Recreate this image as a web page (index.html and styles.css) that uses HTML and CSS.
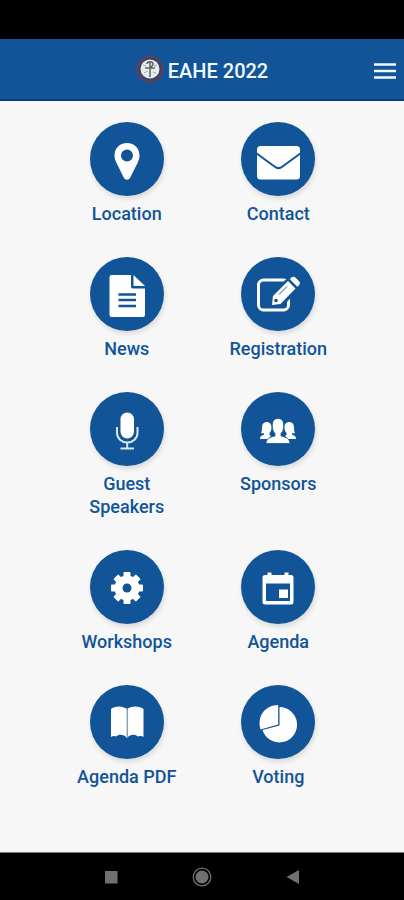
FILE: index.html
```html
<!DOCTYPE html>
<html lang="en">
<head>
<meta charset="utf-8">
<meta name="viewport" content="width=device-width, initial-scale=1">
<title>EAHE 2022</title>
<link rel="stylesheet" href="styles.css">
</head>
<body>
<div class="status"></div>
<header class="header">
  <div class="brand">
    <svg class="logo" viewBox="0 0 28 28" aria-hidden="true">
      <circle cx="14" cy="14" r="12.500" fill="#354568" stroke="#633f58" stroke-width="2"/>
      <circle cx="14" cy="14" r="9.500" fill="#e9ecec"/>
      <g fill="none" stroke="#5c646e" stroke-width="1.500">
        <path d="M14 6v16M9 13h10M11 9c0-3 6-3 6 0 0 2-3 3-3 5" />
        <path d="M7 10l3 1M18 11l3-1M8 18l4-2M17 17l3 1" stroke="#a6acb2" stroke-width="1"/>
      </g>
    </svg>
    <h1 class="title">EAHE 2022</h1>
  </div>
  <button class="menu" type="button" aria-label="Menu">
    <svg viewBox="0 0 22 18" aria-hidden="true"><path d="M0 2.500h22M0 9h22M0 15.500h22" stroke="#f2fafc" stroke-width="2.400"/></svg>
  </button>
</header>
<main class="grid">
  <a class="tile" href="#location">
    <svg class="icon" viewBox="0 0 74 74" aria-hidden="true"><path fill-rule="evenodd" d="M37 21c-7.500 0-12.500 5.500-12.500 12.500 0 3 1 5.300 2 7.500l7.500 15c1.300 2.300 4.700 2.300 6 0l7.500-15c1-2.200 2-4.500 2-7.500C49.500 26.500 44.500 21 37 21zm0 6.500a6 6 0 1 1 0 12 6 6 0 0 1 0-12z"/></svg>
    <span class="label">Location</span>
  </a>
  <a class="tile" href="#contact">
    <svg class="icon" viewBox="0 0 74 74" aria-hidden="true"><rect x="16" y="24" width="43" height="33.500" rx="3.500"/><path d="M15 31l18.500 13.500c2.500 2 5.500 2 8 0L60 31" fill="none" stroke="#115497" stroke-width="2"/></svg>
    <span class="label">Contact</span>
  </a>
  <a class="tile" href="#news">
    <svg class="icon" viewBox="0 0 74 74" aria-hidden="true"><path d="M21.500 18H41v11.500a2 2 0 0 0 2 2h12V58a2 2 0 0 1-2 2H21.500a2 2 0 0 1-2-2V20a2 2 0 0 1 2-2z"/><path d="M43.500 18L55 29H43.500z"/><path d="M28.500 37.500H46M28.500 43H46M28.500 49H46" stroke="#115497" stroke-width="2.500"/></svg>
    <span class="label">News</span>
  </a>
  <a class="tile" href="#registration">
    <svg class="icon" viewBox="0 0 74 74" aria-hidden="true"><rect x="17.500" y="23" width="30" height="30" rx="5" fill="none" stroke="#fff" stroke-width="3"/><path d="M29 50l1-13L52 15.500 63 27 42 49z" fill="#115497"/><path d="M31 48l1-9L47 24l7.500 7.500L39.500 47z"/><path d="M48.800 22.300l1.800-1.800c1-1 2.700-1 3.700 0l3.800 3.800c1 1 1 2.700 0 3.700l-1.800 1.800z"/><path d="M38 37.500l8-8" stroke="#115497" stroke-width="1"/><circle cx="35" cy="43.500" r="1.800" fill="#115497"/></svg>
    <span class="label">Registration</span>
  </a>
  <a class="tile" href="#guest-speakers">
    <svg class="icon" viewBox="0 0 74 74" aria-hidden="true"><rect x="30.500" y="20.500" width="13.500" height="26" rx="6.700"/><path d="M27 35v6a10.200 9.500 0 0 0 20.500 0v-6M37.200 50v6M30.500 56.500h13.500" fill="none" stroke="#dce7f0" stroke-width="2"/></svg>
    <span class="label">Guest Speakers</span>
  </a>
  <a class="tile" href="#sponsors">
    <svg class="icon" viewBox="0 0 74 74" aria-hidden="true"><path d="M25.500 30c3.500 0 5 2.300 5 5.500 0 2.500-.8 4.300-2 5.500v2l1.500 1-3 3h-8c0-2.700 1-3.300 4-4.200v-1.500h-3c1-1.500.8-3.500 1-6 .2-3.200 1.500-5.300 4.500-5.300z"/><path d="M48.500 30c-3.500 0-5 2.300-5 5.500 0 2.500.8 4.300 2 5.500v2l-1.500 1 3 3h8c0-2.700-1-3.300-4-4.200v-1.500h3c-1-1.500-.8-3.500-1-6-.2-3.200-1.500-5.300-4.500-5.300z"/><path d="M37 26.500c4 0 5.700 3 5.700 7 0 4-1 6.500-2.700 8V44c5 1.200 8.500 2 9 7.500H25c.5-5.500 4-6.300 9-7.500v-2.500c-1.700-1.500-2.700-4-2.700-8s1.700-7 5.700-7z" stroke="#115497" stroke-width=".8"/></svg>
    <span class="label">Sponsors</span>
  </a>
  <a class="tile" href="#workshops">
    <svg class="icon" viewBox="0 0 74 74" aria-hidden="true"><g transform="translate(37 38)"><circle r="12.500"/><rect x="-3.500" y="-16" width="7" height="32" rx="1"/><rect x="-16" y="-3.500" width="32" height="7" rx="1"/><g transform="rotate(45)"><rect x="-3.500" y="-16" width="7" height="32" rx="1"/><rect x="-16" y="-3.500" width="32" height="7" rx="1"/></g><circle r="4.500" fill="#115497"/></g></svg>
    <span class="label">Workshops</span>
  </a>
  <a class="tile" href="#agenda">
    <svg class="icon" viewBox="0 0 74 74" aria-hidden="true"><path fill-rule="evenodd" d="M24 25h2.500v-2.500h4V25h13v-2.500h4V25H50a2.500 2.500 0 0 1 2.500 2.500V52a2.500 2.500 0 0 1-2.500 2.500H24a2.500 2.500 0 0 1-2.500-2.500V27.500A2.500 2.500 0 0 1 24 25zm1 8.500V51h24V33.500z"/><rect x="38" y="39.500" width="9" height="8.500"/></svg>
    <span class="label">Agenda</span>
  </a>
  <a class="tile" href="#agenda-pdf">
    <svg class="icon" viewBox="0 0 74 74" aria-hidden="true"><path d="M21 24c3-3.300 12-3.500 16 0v29c-3.500-4.200-8-4.200-11-1.500-1.500-1-3.500-.5-5 .5zM53.500 24c-3-3.300-12.500-3.500-16.500 0v29c3.500-4.200 8-4.200 11-1.500 1.500-1 4-.5 5.500.5z"/><path d="M37.300 24v29" stroke="#8ba2b5" stroke-width="1.500"/></svg>
    <span class="label">Agenda PDF</span>
  </a>
  <a class="tile" href="#voting">
    <svg class="icon" viewBox="0 0 74 74" aria-hidden="true"><path d="M38.500 22A17.700 17.700 0 1 1 21.500 45l17-4.500z"/><path d="M37.200 20v19.500L19.500 44.500C15.500 31 24.500 20 37.200 20z"/></svg>
    <span class="label">Voting</span>
  </a>
</main>
<nav class="navbar" aria-label="System">
  <button class="key" type="button" aria-label="Recent apps"><svg viewBox="0 0 20 20"><path d="M4 4h12.500v12.500H4z"/></svg></button>
  <button class="key" type="button" aria-label="Home"><svg viewBox="0 0 20 20"><circle cx="10" cy="10" r="8.800" fill="none" stroke="#707070" stroke-width="1.300"/><circle cx="10" cy="10" r="6.500"/></svg></button>
  <button class="key" type="button" aria-label="Back"><svg viewBox="0 0 20 20"><path d="M3.500 10L16 3v14z"/></svg></button>
</nav>
</body>
</html>
```
FILE: styles.css
```css
* {
  box-sizing: border-box;
}

body {
  margin: 0;
  min-height: 100vh;
  display: flex;
  flex-direction: column;
  background: #f7f7f7;
  font-family: Roboto, "Liberation Sans", sans-serif;
}

button {
  padding: 0;
  border: 0;
  background: none;
}

svg {
  display: block;
}

.status {
  height: 39px;
  background: #000;
}

.header {
  display: grid;
  grid-template-columns: 1fr auto 1fr;
  align-items: center;
  height: 62px;
  padding: 4px 8px 0;
  background: #115497;
  border-bottom: 2px solid #073b7c;
}

.brand {
  grid-column: 2;
  display: flex;
  align-items: center;
  gap: 4px;
}

.logo {
  width: 28px;
  height: 28px;
  margin-bottom: 4px;
}

.title {
  margin: 0;
  color: #f1f8fc;
  font-size: 20px;
  line-height: 24px;
  font-weight: 500;
}

.menu {
  justify-self: end;
  width: 22px;
  height: 18px;
}

.grid {
  flex: 1;
  display: grid;
  grid-template-columns: 1fr 1fr;
  align-content: start;
  row-gap: 32px;
  padding: 21px 50px 32px 51px;
}

.tile {
  display: flex;
  flex-direction: column;
  align-items: center;
  gap: 6px;
  color: #115497;
  text-decoration: none;
}

.icon {
  width: 74px;
  height: 74px;
  border-radius: 50%;
  background: #115497;
  fill: #fff;
  box-shadow: 1px 3px 5px rgba(0, 0, 0, 0.12);
}

.label {
  max-width: 110px;
  font-size: 18px;
  line-height: 23px;
  font-weight: 500;
  text-align: center;
}

.navbar {
  display: flex;
  justify-content: center;
  align-items: center;
  gap: 71px;
  height: 48px;
  border-top: 1px solid #777;
  background: #000;
}

.key {
  width: 20px;
  height: 20px;
  fill: #707070;
}
```
